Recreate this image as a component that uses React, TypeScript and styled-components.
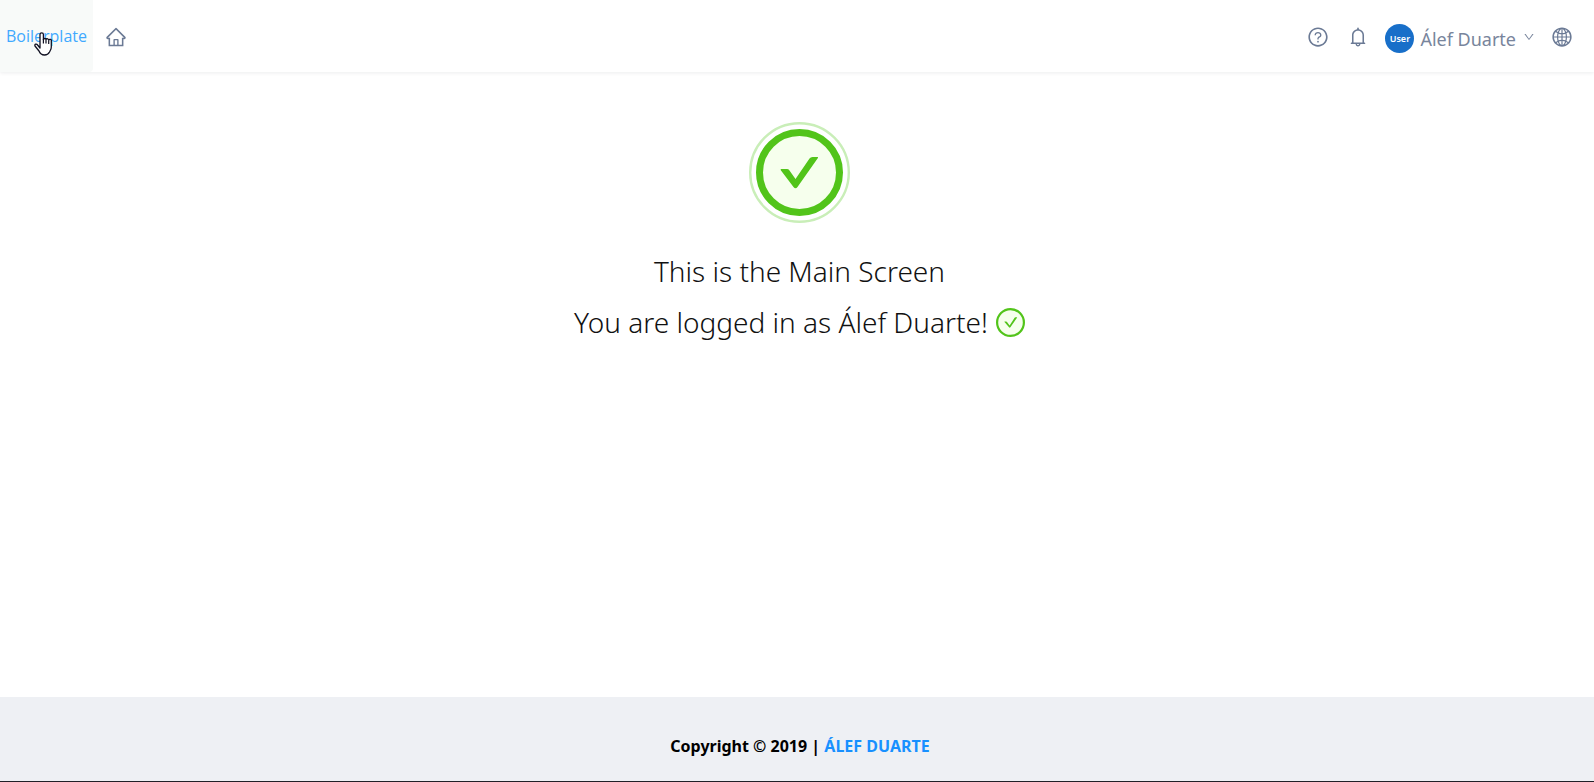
import React from "react";
import styled, { createGlobalStyle } from "styled-components";
import {
  AiOutlineBell,
  AiOutlineDown,
  AiOutlineGlobal,
  AiOutlineHome,
  AiOutlineQuestionCircle,
} from "react-icons/ai";

const GlobalStyle = createGlobalStyle`
  *, *::before, *::after { box-sizing: border-box; }
  body {
    margin: 0;
    background: #fff;
    font-family: "Segoe UI", "Noto Sans", "Open Sans", sans-serif;
  }
`;

const Page = styled.div`
  display: flex;
  flex-direction: column;
  min-height: 100vh;
  border-bottom: 1px solid #202028;
`;

const Header = styled.header`
  display: flex;
  justify-content: space-between;
  height: 72px;
  box-shadow: 0 1px 4px rgba(0, 21, 41, 0.08);
`;

const Nav = styled.nav`
  display: flex;
  align-items: stretch;
`;

const Brand = styled.a`
  position: relative;
  display: flex;
  align-items: center;
  padding: 0 6px;
  border-radius: 0 0 4px 0;
  background: #f8faf9;
  color: #40a9ff;
  font-family: "Open Sans", sans-serif;
  font-size: 16px;
  text-decoration: none;
`;

const Pointer = styled.svg`
  position: absolute;
  left: 34px;
  top: 32px;
  width: 18px;
  height: 24px;
`;

const HomeLink = styled.a`
  display: flex;
  align-items: center;
  padding: 2px 12px 0;
  color: #6b7a95;
  font-size: 22px;
`;

const Actions = styled.div`
  display: flex;
  align-items: center;
  gap: 18px;
  padding: 1px 21px 0 0;
`;

const IconButton = styled.button`
  display: flex;
  padding: 0;
  border: 0;
  background: none;
  color: #6b7a95;
  font-size: 22px;
  cursor: pointer;
`;

const UserButton = styled.button`
  display: flex;
  align-items: center;
  padding: 4px 0 0;
  margin: 0 -2px;
  border: 0;
  background: none;
  color: #78859c;
  font: inherit;
  font-size: 18px;
  cursor: pointer;

  > svg {
    margin: -4px 0 0 7px;
    font-size: 12px;
  }
`;

const Avatar = styled.span`
  display: flex;
  align-items: center;
  justify-content: center;
  width: 29px;
  height: 29px;
  margin-right: 6px;
  border-radius: 50%;
  background: #186fc9;
  color: #fff;
  font-size: 9px;
  font-weight: 600;
`;

const Main = styled.main`
  display: flex;
  flex: 1;
  flex-direction: column;
  align-items: center;
  padding: 50px 0 24px 5px;
`;

const Title = styled.h1`
  display: flex;
  align-items: center;
  gap: 8px;
  margin: 0;
  color: #111;
  font-size: 28px;
  font-weight: 300;
  line-height: 51px;
`;

const Badge = styled.svg`
  width: 101px;
  height: 101px;
  margin-bottom: 23px;
`;

const SmallBadge = styled.svg`
  width: 29px;
  height: 29px;
`;

const Footer = styled.footer`
  display: flex;
  justify-content: center;
  height: 84px;
  padding: 37px 0 0 6px;
  background: #eef0f4;
  color: #000;
  font-size: 16px;
  font-weight: 700;
  line-height: 24px;
  white-space: pre;
`;

const FooterLink = styled.a`
  color: #1890ff;
  text-decoration: none;
`;

export default function App() {
  return (
    <Page>
      <GlobalStyle />
      <Header>
        <Nav>
          <Brand href="#">
            Boilerplate
            <Pointer viewBox="0 0 18 24" aria-hidden="true">
              <path
                d="M6 13V2.5a1.7 1.7 0 0 1 3.4 0V7.5a1.4 1.4 0 0 1 2.6-.2 1.5 1.5 0 0 1 2.7.8 1.4 1.4 0 0 1 2.6 1V15c0 2.5-1.2 3.5-1.8 5-1 2-2.5 3-5 3-3 0-4.500-1.500-5.500-4L1 14c-.6-2 1.500-2.500 2.600-1L6 16Z"
                fill="#fff"
                stroke="#111122"
                strokeWidth="1.3"
                strokeLinejoin="round"
              />
              <path d="M9.400 7v4.500M12 7.500v4M14.700 8.500v3.500" fill="none" stroke="#111122" strokeWidth="1.2" />
            </Pointer>
          </Brand>
          <HomeLink href="#" aria-label="Home">
            <AiOutlineHome />
          </HomeLink>
        </Nav>
        <Actions>
          <IconButton aria-label="Help">
            <AiOutlineQuestionCircle />
          </IconButton>
          <IconButton aria-label="Notifications">
            <AiOutlineBell />
          </IconButton>
          <UserButton>
            <Avatar>User</Avatar>
            Álef Duarte
            <AiOutlineDown />
          </UserButton>
          <IconButton aria-label="Language">
            <AiOutlineGlobal />
          </IconButton>
        </Actions>
      </Header>
      <Main>
        <Badge viewBox="0 0 101 101" aria-hidden="true">
          <circle cx="50.5" cy="50.5" r="49.300" fill="none" stroke="#c9eeb8" strokeWidth="2.400" />
          <circle cx="50.5" cy="50.5" r="40" fill="#f6ffed" stroke="#52c41a" strokeWidth="7" />
          <path
            d="M32.500 47h5.500q1.500 0 2.300 1.200L46.500 57 60.500 36.500q1-1.500 3-1.500h5q1 0 .4 1L48.500 65q-2 2.500-4 0L31.800 48.200q-.7-1.200.7-1.200Z"
            fill="#52c41a"
          />
        </Badge>
        <Title>This is the Main Screen</Title>
        <Title as="h2">
          You are logged in as Álef Duarte!
          <SmallBadge viewBox="0 0 29 29" aria-hidden="true">
            <circle cx="14.500" cy="14.500" r="13.400" fill="#f6ffed" stroke="#52c41a" strokeWidth="2.200" />
            <path
              d="M8.700 13.600h1.500q.5 0 .8.400l2.600 3.500 5-7.800q.3-.5.9-.5h1.300q.5 0 .2.500l-6.600 9.600q-.7.900-1.400 0L8.500 14.100q-.3-.5.200-.5Z"
              fill="#52c41a"
            />
          </SmallBadge>
        </Title>
      </Main>
      <Footer>
        <span>Copyright © 2019 | </span>
        <FooterLink href="#">ÁLEF DUARTE</FooterLink>
      </Footer>
    </Page>
  );
}
